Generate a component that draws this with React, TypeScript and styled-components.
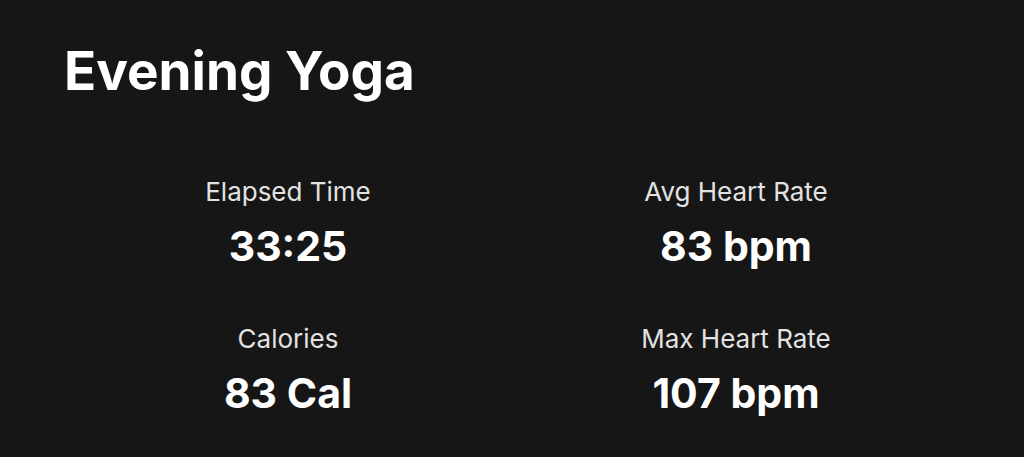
import React from "react";
import styled, { createGlobalStyle } from "styled-components";

const GlobalStyle = createGlobalStyle`
  html, body {
    margin: 0;
    padding: 0;
    background: #161616;
  }
  body {
    font-family: Inter, "Noto Sans", sans-serif;
    color: #ffffff;
  }
`;

const Page = styled.div`
  width: 1024px;
  height: 457px;
  box-sizing: border-box;
  padding: 39px 64px 0;
  background: #161616;
  overflow: hidden;
`;

const Title = styled.h1`
  margin: 0;
  font-size: 53px;
  line-height: 64px;
  font-weight: 700;
`;

const StatGrid = styled.div`
  display: grid;
  grid-template-columns: 1fr 1fr;
  row-gap: 53px;
  margin-top: 73px;
`;

const Stat = styled.div`
  display: flex;
  flex-direction: column;
  align-items: center;
`;

const Label = styled.div`
  font-size: 26px;
  line-height: 32px;
  color: #e2e2e2;
`;

const Value = styled.div`
  font-size: 41px;
  line-height: 48px;
  font-weight: 700;
  margin-top: 14px;
`;

const stats = [
  { label: "Elapsed Time", value: "33:25" },
  { label: "Avg Heart Rate", value: "83 bpm" },
  { label: "Calories", value: "83 Cal" },
  { label: "Max Heart Rate", value: "107 bpm" },
];

const App = () => {
  return (
    <>
      <GlobalStyle />
      <Page>
        <Title>Evening Yoga</Title>
        <StatGrid>
          {stats.map((s) => (
            <Stat key={s.label}>
              <Label>{s.label}</Label>
              <Value>{s.value}</Value>
            </Stat>
          ))}
        </StatGrid>
      </Page>
    </>
  );
};

export default App;
